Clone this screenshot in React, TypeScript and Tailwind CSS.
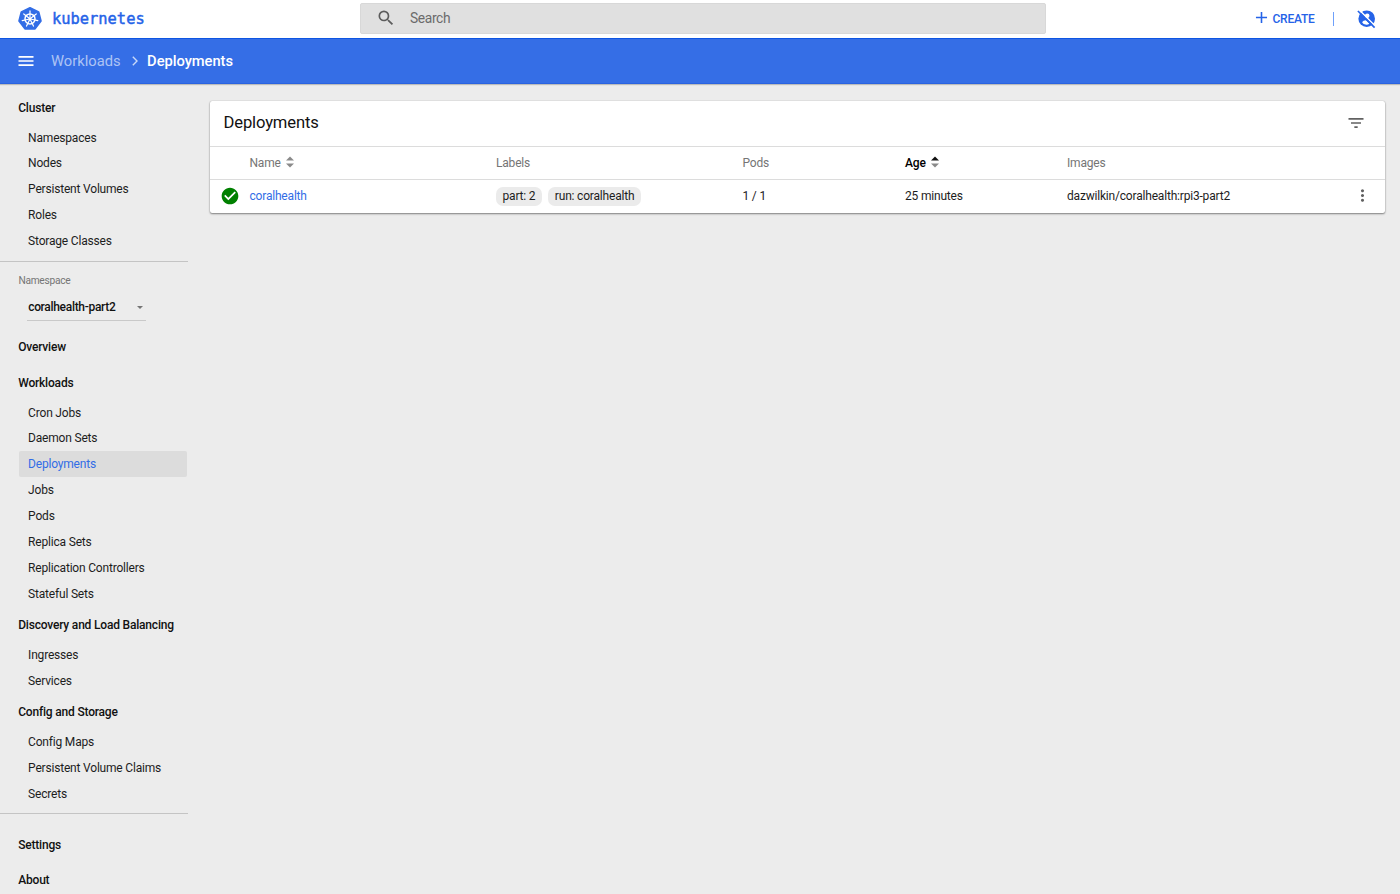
import { MdAdd, MdCheckCircle, MdFilterList, MdMenu, MdMoreVert, MdSearch } from 'react-icons/md';

interface Group {
  title: string;
  items: string[];
}

const CLUSTER: Group = {
  title: 'Cluster',
  items: ['Namespaces', 'Nodes', 'Persistent Volumes', 'Roles', 'Storage Classes'],
};

const GROUPS: Group[] = [
  { title: 'Overview', items: [] },
  {
    title: 'Workloads',
    items: ['Cron Jobs', 'Daemon Sets', 'Deployments', 'Jobs', 'Pods', 'Replica Sets', 'Replication Controllers', 'Stateful Sets'],
  },
  { title: 'Discovery and Load Balancing', items: ['Ingresses', 'Services'] },
  { title: 'Config and Storage', items: ['Config Maps', 'Persistent Volume Claims', 'Secrets'] },
];

const FOOTER: Group[] = [
  { title: 'Settings', items: [] },
  { title: 'About', items: [] },
];

const SPOKES = [0, 1, 2, 3, 4, 5, 6].map(i => (i * 360) / 7);

const COLS = 'grid grid-cols-[39.5px_246.5px_246.5px_162.5px_162px_1fr_46px] items-center';

export default function App() {
  return (
    <div className="flex h-[894px] w-full flex-col overflow-hidden bg-[#ececec] font-['Roboto',sans-serif] text-[12px] tracking-[-0.19px] text-[#1d1d1d]">
      <TopBar />
      {/* Breadcrumbs */}
      <div className="z-10 flex h-[46px] shrink-0 items-center border-t border-b border-t-[#0d55e3] border-b-[#2a63e0] bg-[#356ee6] pl-4 text-white shadow-[0_1px_1px_rgba(0,0,0,0.2)]">
        <MdMenu className="size-5" />
        <span className="ml-[15px] text-[14.7px] tracking-[0.02px] text-white/60">Workloads</span>
        <svg className="mr-[9.5px] ml-[11px] h-[10px] w-[6px]" viewBox="0 0 6 10">
          <path d="M0.8 0.8 L5 5 L0.8 9.2" fill="none" stroke="#c9d9f8" strokeWidth="1.4" />
        </svg>
        <span className="mt-px text-[14.7px] font-medium tracking-[-0.02px]">Deployments</span>
      </div>
      <div className="flex min-h-0 flex-1">
        <Sidebar />
        <main className="flex-1 pt-[17px] pr-[15px] pl-[22px]">
          <DeploymentsCard />
        </main>
      </div>
    </div>
  );
}

function TopBar() {
  return (
    <header className="flex h-[38px] shrink-0 items-start bg-white text-[#2563e8]">
      <div className="flex h-[38px] w-[360px] items-center pl-[17px]">
        <Logo />
        <span className="mt-[2px] ml-[9px] font-['DejaVu_Sans_Mono',monospace] text-[15.4px] tracking-normal [-webkit-text-stroke:0.45px_#2563e8]">kubernetes</span>
      </div>
      <div className="mt-[3px] flex h-[31px] w-[686px] items-center rounded-[2px] border border-[#d8d8d8] bg-[#e0e0e0] pl-[15px]">
        <MdSearch className="-mt-px size-[20px] text-[#5c5c5c]" />
        <span className="-mt-px ml-[14px] text-[13.8px] tracking-[-0.36px] text-[#6b6b6b]">Search</span>
      </div>
      <div className="flex h-[37px] flex-1 items-center pl-[206px]">
        <MdAdd className="-mt-[3px] size-[19px]" />
        <span className="ml-[1.5px] font-medium tracking-[-0.25px]">CREATE</span>
        <span className="ml-[18.5px] h-[14px] w-[1.5px] bg-[#6ea0fb]" />
        <span className="ml-[22px]">
          <AccountOff />
        </span>
      </div>
    </header>
  );
}

function Logo() {
  return (
    <svg className="size-[26px]" viewBox="0 0 26 26">
      <path
        d="M13 1.9 L21.6 6 L23.9 14.9 L18 22.8 H8 L2.1 14.9 L4.4 6 Z"
        fill="#326de6"
        stroke="#326de6"
        strokeWidth="1.8"
        strokeLinejoin="round"
      />
      <g stroke="#fff" fill="none">
        <circle cx="13" cy="12.9" r="5" strokeWidth="1.5" />
        {SPOKES.map(a => (
          <path key={a} d="M13 11.5V4.9" strokeWidth="1.2" strokeLinecap="round" transform={`rotate(${a} 13 12.9)`} />
        ))}
      </g>
      <circle cx="13" cy="12.9" r="1.5" fill="#fff" />
    </svg>
  );
}

function AccountOff() {
  return (
    <svg className="size-[20px]" viewBox="0 0 20 20">
      <circle cx="10.7" cy="9.7" r="8.3" fill="#2563e8" />
      <circle cx="11.2" cy="6.7" r="2.3" fill="#fff" />
      <path d="M6.2 13.4 C6.4 11.9 8.6 11.4 10 11.3 L13.4 14.8 A5.2 5.2 0 0 1 6.2 13.4 Z" fill="#fff" />
      <path d="M3 0.8 L19.5 17.3" stroke="#fff" strokeWidth="1.6" />
      <path d="M1.9 2 L18.6 18.7" stroke="#2563e8" strokeWidth="1.7" />
    </svg>
  );
}

function Sidebar() {
  return (
    <nav className="w-[188px] shrink-0">
      <div className="h-[178px] border-b border-[#c4c4c4] pt-[6.6px]">
        <NavGroup {...CLUSTER} />
      </div>
      <div className="h-[68.3px] pt-[12px] pl-[18.4px]">
        <div className="text-[10.2px] leading-[14px] tracking-[-0.27px] text-[#757575]">Namespace</div>
        <div className="mt-[6px] ml-[8.6px] flex h-[27px] w-[119px] items-center justify-between border-b border-[#c9c9c9] pr-[3px] pl-[1.2px] font-medium tracking-[-0.31px] text-[#111]">
          <span>coralhealth-part2</span>
          <span className="border-x-[3px] border-t-[3px] border-x-transparent border-t-[#757575]" />
        </div>
      </div>
      <div className="border-b border-[#c4c4c4] pb-[6.5px]">
        <div className="flex flex-col gap-[1.35px]">
          {GROUPS.map(g => (
            <NavGroup key={g.title} {...g} />
          ))}
        </div>
      </div>
      <div className="flex flex-col gap-px pt-[14px]">
        {FOOTER.map(g => (
          <NavGroup key={g.title} {...g} />
        ))}
      </div>
    </nav>
  );
}

function NavGroup({ title, items }: Group) {
  return (
    <div>
      <div className="flex h-[34px] items-center pl-[18.2px] font-medium tracking-[-0.19px] whitespace-nowrap text-[#111]">{title}</div>
      {items.map(item => (
        <div
          key={item}
          className={
            item === 'Deployments'
              ? 'ml-[19px] mr-px flex h-[25.86px] items-center rounded-[2px] bg-[#dcdcdc] pl-[9.1px] text-[#326de6]'
              : 'ml-[19px] mr-px flex h-[25.86px] items-center pl-[9.1px]'
          }
        >
          {item}
        </div>
      ))}
    </div>
  );
}

function DeploymentsCard() {
  return (
    <section className="h-[112px] rounded-[2px] bg-white shadow-[0_1px_2px_rgba(0,0,0,0.45),0_0_1px_rgba(0,0,0,0.3)]">
      <div className="flex h-[45px] items-center justify-between pr-[19.5px] pl-[13.5px]">
        <h1 className="text-[16.6px] tracking-[-0.15px] text-[#111]">Deployments</h1>
        <MdFilterList className="-mt-px size-5 text-[#616161]" />
      </div>
      <div className={`${COLS} h-[33px] border-t border-[#dcdcdc] text-[#757575]`}>
        <span />
        <span className="flex items-center">
          Name
          <SortArrows up="#8a8a8a" />
        </span>
        <span>Labels</span>
        <span>Pods</span>
        <span className="flex items-center font-medium text-black">
          Age
          <SortArrows up="#111" />
        </span>
        <span>Images</span>
        <span />
      </div>
      <div className={`${COLS} h-[33px] border-t border-[#dcdcdc]`}>
        <MdCheckCircle className="-mt-px ml-[10px] size-5 text-[#008000]" />
        <span className="text-[#326de6]">coralhealth</span>
        <span className="flex gap-[6.5px]">
          <Chip text="part: 2" />
          <Chip text="run: coralhealth" />
        </span>
        <span>1 / 1</span>
        <span>25 minutes</span>
        <span>dazwilkin/coralhealth:rpi3-part2</span>
        <MdMoreVert className="-mt-px ml-[14px] size-[19px] text-[#616161]" />
      </div>
    </section>
  );
}

function Chip({ text }: { text: string }) {
  return <span className="flex h-[19px] items-center rounded-[7px] bg-[#ebebeb] px-[6.5px] whitespace-nowrap">{text}</span>;
}

function SortArrows({ up }: { up: string }) {
  return (
    <svg className="-mt-[2px] ml-[5px] h-3 w-2" viewBox="0 0 8 12">
      <path d="M0 4.5 L4 0.5 L8 4.5 Z" fill={up} />
      <path d="M0 7.5 L4 11.5 L8 7.5 Z" fill="#8a8a8a" />
    </svg>
  );
}
